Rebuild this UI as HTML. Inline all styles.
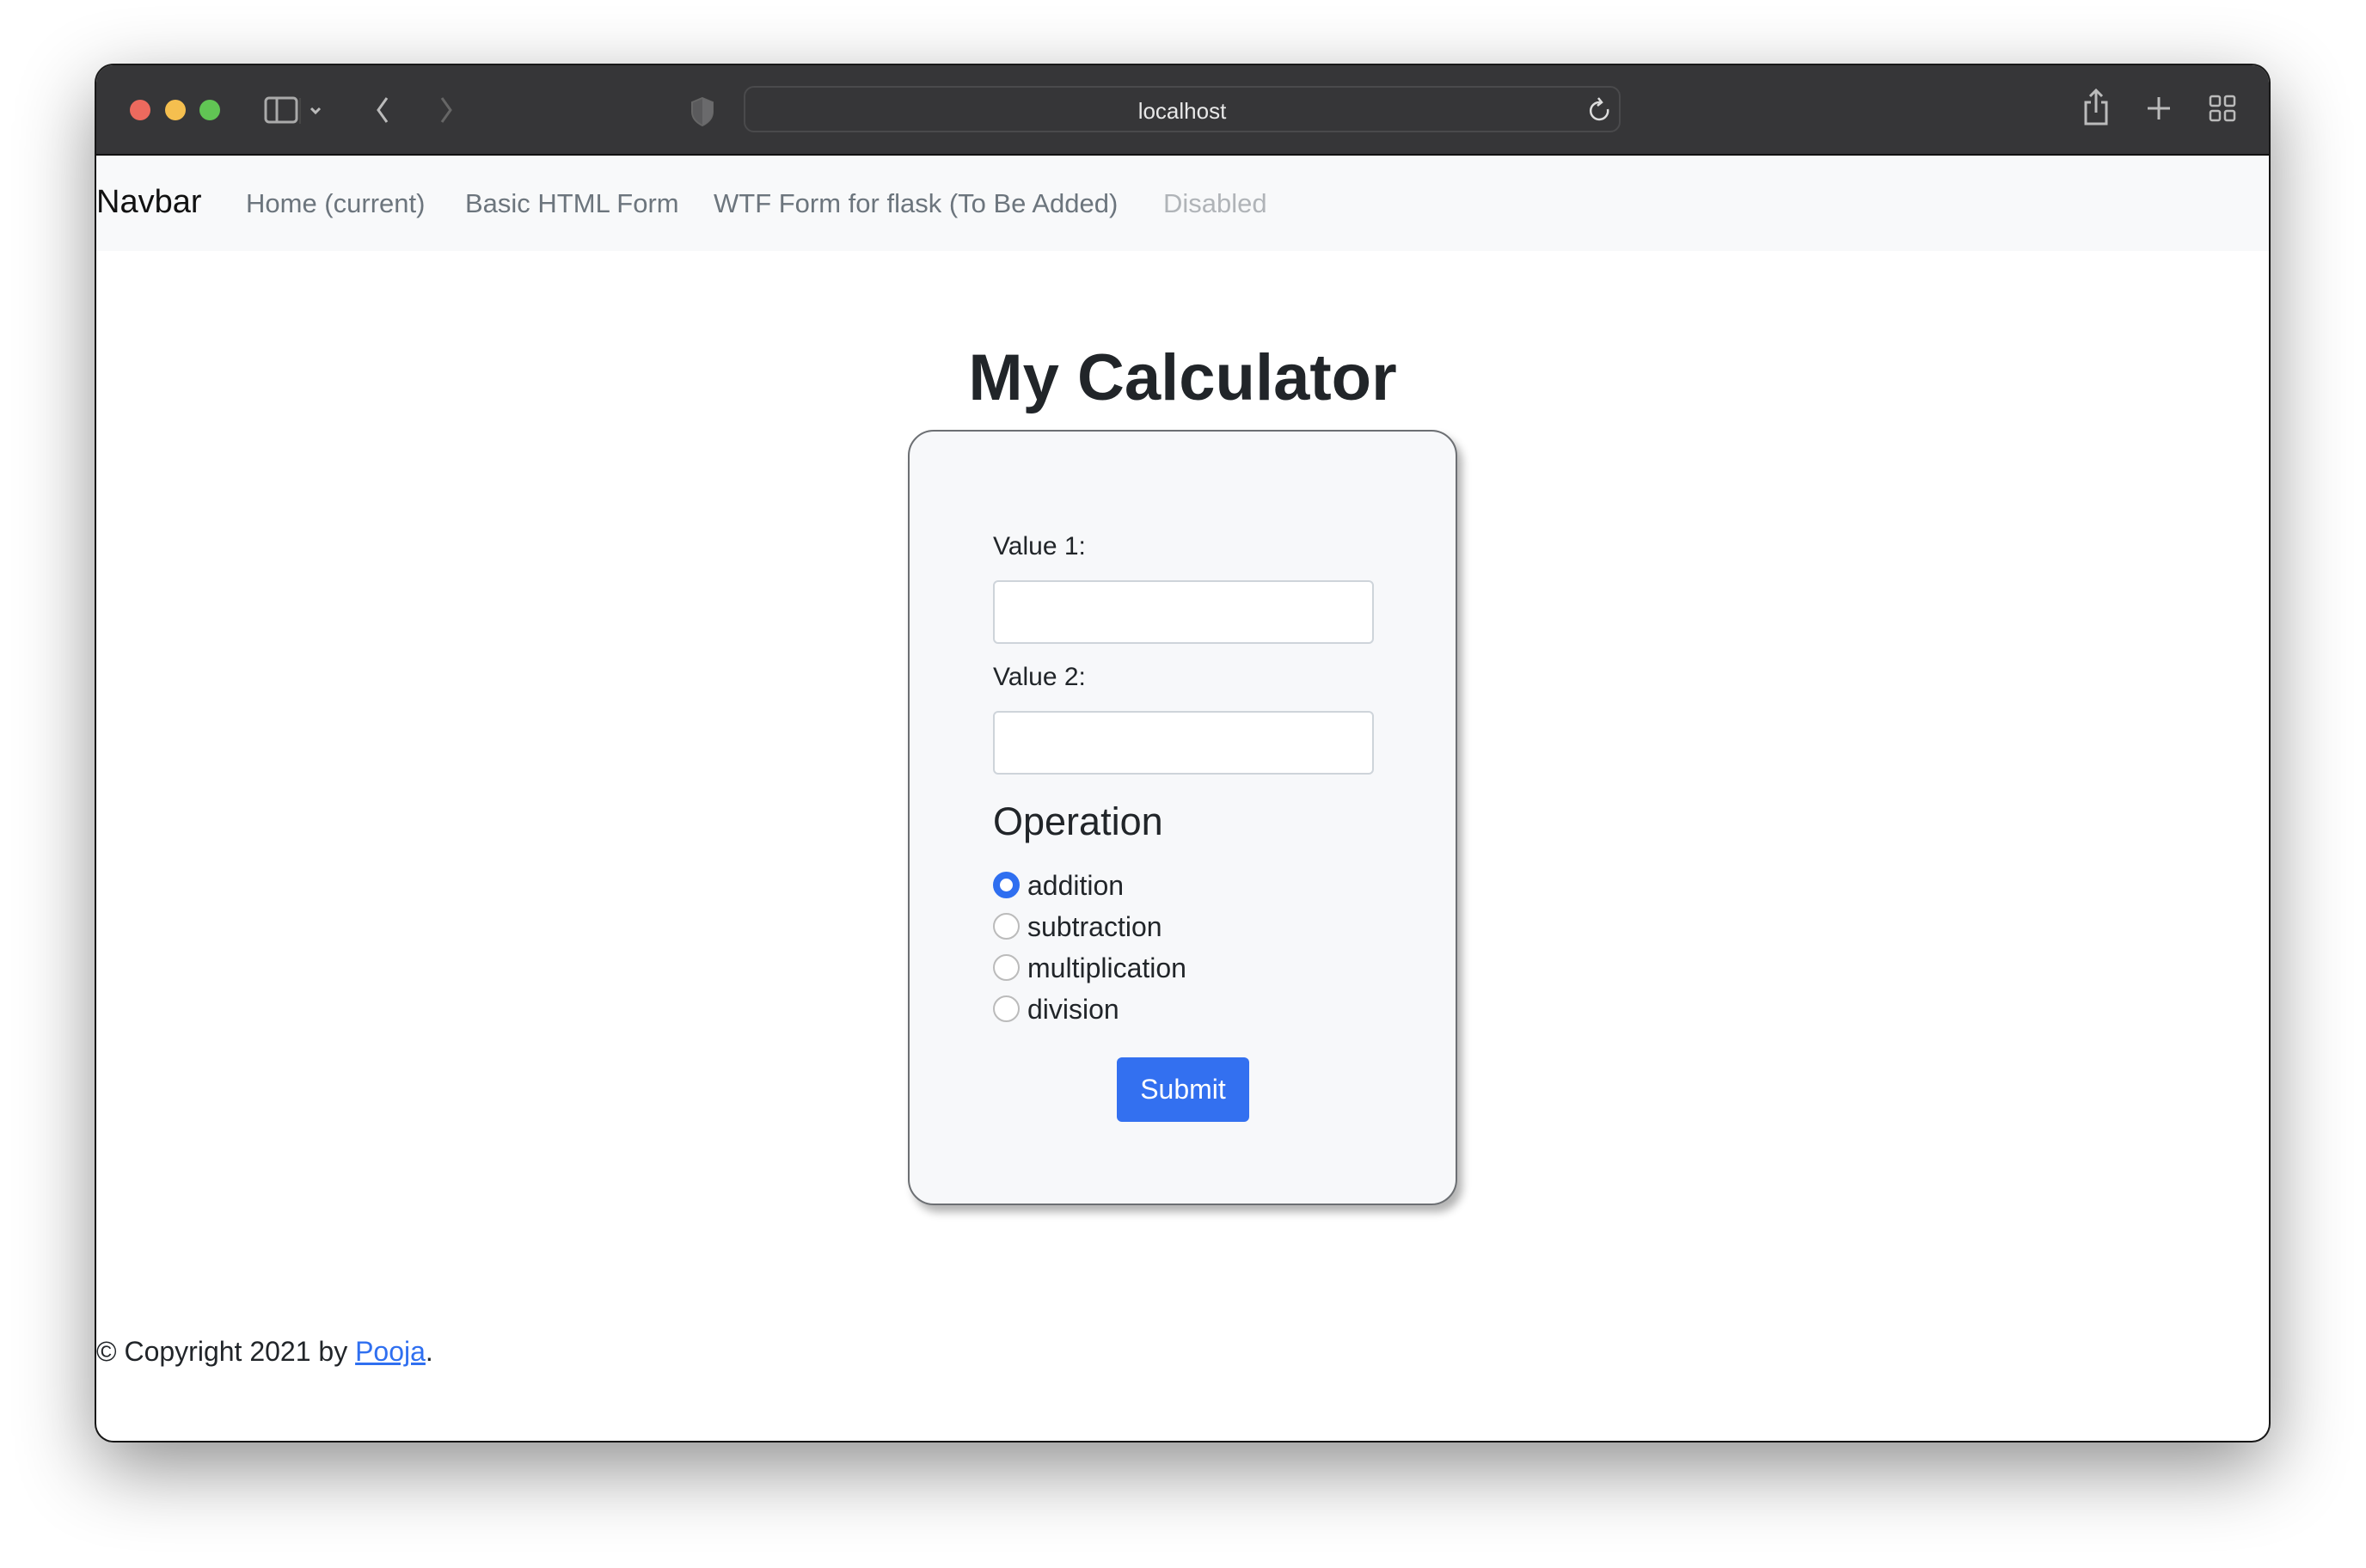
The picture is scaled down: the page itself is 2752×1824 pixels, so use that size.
<!DOCTYPE html>
<html><head><meta charset="utf-8">
<style>
*{box-sizing:border-box;margin:0;padding:0}
html,body{width:2752px;height:1824px;background:#fff;overflow:hidden;font-family:"Liberation Sans",Arial,sans-serif;color:#212529}
.win{position:absolute;left:112px;top:76px;width:2527px;height:1600px;border-radius:20px;background:#fff;box-shadow:0 30px 90px rgba(0,0,0,.45),0 0 0 2px #1c1c1c;overflow:hidden}
.tb{position:absolute;left:0;top:0;width:100%;height:105px;background:#363638;border-bottom:2px solid #111}
.dot{position:absolute;top:40px;width:24px;height:24px;border-radius:50%}
.url{position:absolute;left:753px;top:24px;width:1020px;height:54px;border:2px solid #4a4a4c;border-radius:12px;background:#363638;color:#e8e8e8;font-size:26px;text-align:center;line-height:54px}
.nav{position:absolute;left:0;top:105px;width:100%;height:111px;background:#f8f9fa}
.nav span{position:absolute;top:38px;font-size:31px;color:#6c757d;white-space:nowrap}
.abs{position:absolute;white-space:nowrap}
.card{position:absolute;left:944px;top:424px;width:639px;height:902px;background:#f7f8fa;border:2px solid #6c6f73;border-radius:30px;box-shadow:6px 8px 10px rgba(0,0,0,.3)}
.inp{position:absolute;left:1043px;width:443px;height:74px;background:#fff;border:2px solid #ced4da;border-radius:6px}
.lbl{position:absolute;left:1043px;font-size:30px}
.r{position:absolute;left:1043px;width:31px;height:31px;border-radius:50%;border:2px solid #bbb;background:#fff}
.rt{position:absolute;left:1083px;font-size:32px}
</style></head><body>
<div class="win">
 <div class="tb">
  <div class="dot" style="left:39px;background:#ed6a5e"></div>
  <div class="dot" style="left:80px;background:#f5bf4f"></div>
  <div class="dot" style="left:120px;background:#61c554"></div>
  <svg class="abs" style="left:195px;top:36px" width="80" height="34" viewBox="0 0 80 34"><rect x="2" y="2" width="36" height="28" rx="4" fill="none" stroke="#aaa" stroke-width="3"/><line x1="15" y1="2" x2="15" y2="30" stroke="#aaa" stroke-width="3"/><line x1="42" y1="2" x2="42" y2="32" stroke="#555" stroke-width="1"/><path d="M55 14 l5 5 l5 -5" fill="none" stroke="#bbb" stroke-width="3"/></svg>
  <svg class="abs" style="left:322px;top:34px" width="110" height="40" viewBox="0 0 110 40"><path d="M16 4 L6 18 L16 32" fill="none" stroke="#bbb" stroke-width="3"/><path d="M80 4 L90 18 L80 32" fill="none" stroke="#666" stroke-width="3"/></svg>
  <svg class="abs" style="left:690px;top:36px" width="30" height="36" viewBox="0 0 30 36"><path d="M15 2 L27 7 V18 C27 26 21 31 15 34 C9 31 3 26 3 18 V7 Z" fill="#5a5a5c" stroke="#666" stroke-width="2"/><path d="M15 2 V34 C21 31 27 26 27 18 V7 Z" fill="#6a6a6c"/></svg>
  <div class="url">localhost</div>
  <svg class="abs" style="left:1735px;top:37px" width="28" height="32" viewBox="0 0 28 32"><path d="M14 6 A10 10 0 1 0 23 14" fill="none" stroke="#ddd" stroke-width="2.5"/><path d="M12 1 L16 6 L11 10" fill="none" stroke="#ddd" stroke-width="2.5"/></svg>
  <svg class="abs" style="left:2310px;top:27px" width="32" height="44" viewBox="0 0 32 44"><path d="M10 16 H4 V41 H28 V16 H22" fill="none" stroke="#bbb" stroke-width="3"/><path d="M16 2 V28 M9 9 L16 2 L23 9" fill="none" stroke="#bbb" stroke-width="3"/></svg>
  <svg class="abs" style="left:2384px;top:35px" width="30" height="30" viewBox="0 0 30 30"><path d="M15 2 V28 M2 15 H28" stroke="#bbb" stroke-width="3"/></svg>
  <svg class="abs" style="left:2457px;top:34px" width="32" height="32" viewBox="0 0 32 32"><g fill="none" stroke="#bbb" stroke-width="2.5"><rect x="2" y="2" width="11" height="11" rx="2"/><rect x="19" y="2" width="11" height="11" rx="2"/><rect x="2" y="19" width="11" height="11" rx="2"/><rect x="19" y="19" width="11" height="11" rx="2"/></g></svg>
 </div>
 <div class="nav">
  <span style="left:0;color:#111;font-size:38px;top:33px">Navbar</span>
  <span style="left:174px">Home (current)</span>
  <span style="left:429px">Basic HTML Form</span>
  <span style="left:718px">WTF Form for flask (To Be Added)</span>
  <span style="left:1241px;color:#b0b4b8">Disabled</span>
 </div>
 <div class="abs" style="left:0;width:100%;text-align:center;top:320px;font-size:76px;font-weight:bold;color:#212529">My Calculator</div>
 <div class="card"></div>
 <div class="lbl" style="top:543px">Value 1:</div>
 <div class="inp" style="top:599px"></div>
 <div class="lbl" style="top:695px">Value 2:</div>
 <div class="inp" style="top:751px"></div>
 <div class="lbl" style="top:854px;font-size:45px">Operation</div>
 <div class="r" style="top:938px;border:8px solid #2f6ff0"></div><div class="rt" style="top:936px">addition</div>
 <div class="r" style="top:986px"></div><div class="rt" style="top:984px">subtraction</div>
 <div class="r" style="top:1034px"></div><div class="rt" style="top:1032px">multiplication</div>
 <div class="r" style="top:1082px"></div><div class="rt" style="top:1080px">division</div>
 <div class="abs" style="left:1187px;top:1154px;width:154px;height:75px;background:#3370f0;border-radius:6px;color:#fff;font-size:32px;text-align:center;line-height:75px">Submit</div>
 <div class="abs" style="left:0;top:1478px;font-size:32px">© Copyright 2021 by <span style="color:#2f6ff0;text-decoration:underline">Pooja</span>.</div>
</div>
</body></html>
